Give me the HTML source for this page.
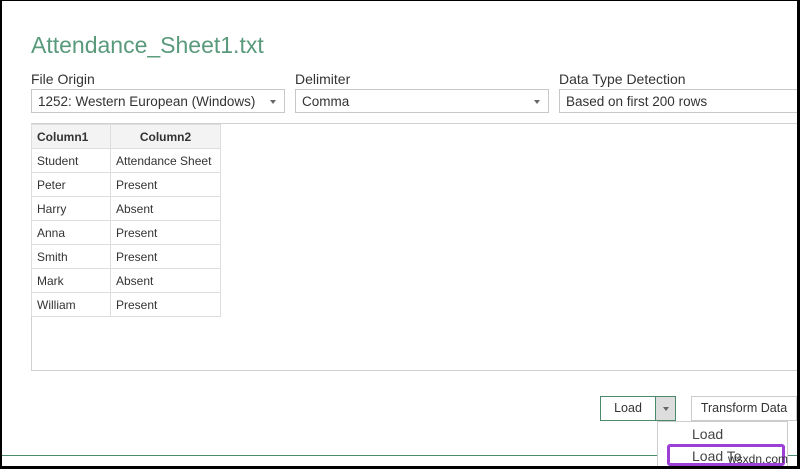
<!DOCTYPE html>
<html><head><style>
body{margin:0;width:800px;height:469px;overflow:hidden;background:#fff;font-family:"Liberation Sans",sans-serif;position:relative}
.a{position:absolute}
.lbl{font-size:14px;color:#333}
.dd{border:1px solid #c8c8c8;height:24px;box-sizing:border-box;font-size:13.5px;color:#333;padding:4px 6px;background:#fff}
.ar{position:absolute;right:8px;top:10px;width:0;height:0;border-left:3.5px solid transparent;border-right:3.5px solid transparent;border-top:4px solid #666}
table{border-collapse:collapse;font-size:12px;color:#333}
td,th{border:1px solid #ddd;height:23px;padding:0 5px;text-align:left}
th{background:#f3f3f3;font-weight:bold}
</style></head><body>
<div class="a" style="left:31px;top:32px;font-size:23px;color:#5a9a7c">Attendance_Sheet1.txt</div>
<div class="a lbl" style="left:31px;top:71px">File Origin</div>
<div class="a lbl" style="left:295px;top:71px">Delimiter</div>
<div class="a lbl" style="left:559px;top:71px">Data Type Detection</div>
<div class="a dd" style="left:31px;top:89px;width:254px">1252: Western European (Windows)<div class="ar"></div></div>
<div class="a dd" style="left:295px;top:89px;width:254px">Comma<div class="ar"></div></div>
<div class="a dd" style="left:559px;top:89px;width:250px">Based on first 200 rows</div>
<div class="a" style="left:31px;top:123px;width:780px;height:248px;border:1px solid #d0d0d0;box-sizing:border-box"></div>
<table class="a" style="left:31px;top:124px">
<tr><th style="width:68px">Column1</th><th style="width:99px;text-align:center">Column2</th></tr>
<tr><td>Student</td><td>Attendance Sheet</td></tr>
<tr><td>Peter</td><td>Present</td></tr>
<tr><td>Harry</td><td>Absent</td></tr>
<tr><td>Anna</td><td>Present</td></tr>
<tr><td>Smith</td><td>Present</td></tr>
<tr><td>Mark</td><td>Absent</td></tr>
<tr><td>William</td><td>Present</td></tr>
</table>
<div class="a" style="left:600px;top:396px;width:56px;height:25px;border:1px solid #4a8a6c;box-sizing:border-box;font-size:12.5px;color:#333;text-align:center;line-height:23px">Load</div>
<div class="a" style="left:655px;top:396px;width:21px;height:25px;border:1px solid #4a8a6c;box-sizing:border-box;background:#ddd"><div class="ar" style="right:6px;top:10px"></div></div>
<div class="a" style="left:691px;top:396px;width:106px;height:25px;border:1px solid #ccc;box-sizing:border-box;font-size:12.5px;color:#333;text-align:center;line-height:23px">Transform Data</div>
<div class="a" style="left:0;top:455px;width:800px;height:1px;background:#4a8a6c"></div>
<div class="a" style="left:657px;top:421px;width:131px;height:48px;border:1px solid #ccc;background:#fff;box-sizing:border-box"></div>
<div class="a" style="left:692px;top:426px;font-size:14px;color:#444">Load</div>
<div class="a" style="left:667px;top:444px;width:118px;height:22px;border:3px solid #9b3fd6;border-radius:3px;box-sizing:border-box"></div>
<div class="a" style="left:692px;top:448px;font-size:14px;color:#444">Load To</div>
<div class="a" style="left:728px;top:452px;font-size:12px;color:#333">wsxdn.com</div>
<div class="a" style="left:0;top:0;width:800px;height:469px;border-style:solid;border-color:#000;border-width:1px 3px 3px 2px;box-sizing:border-box"></div>
</body></html>
